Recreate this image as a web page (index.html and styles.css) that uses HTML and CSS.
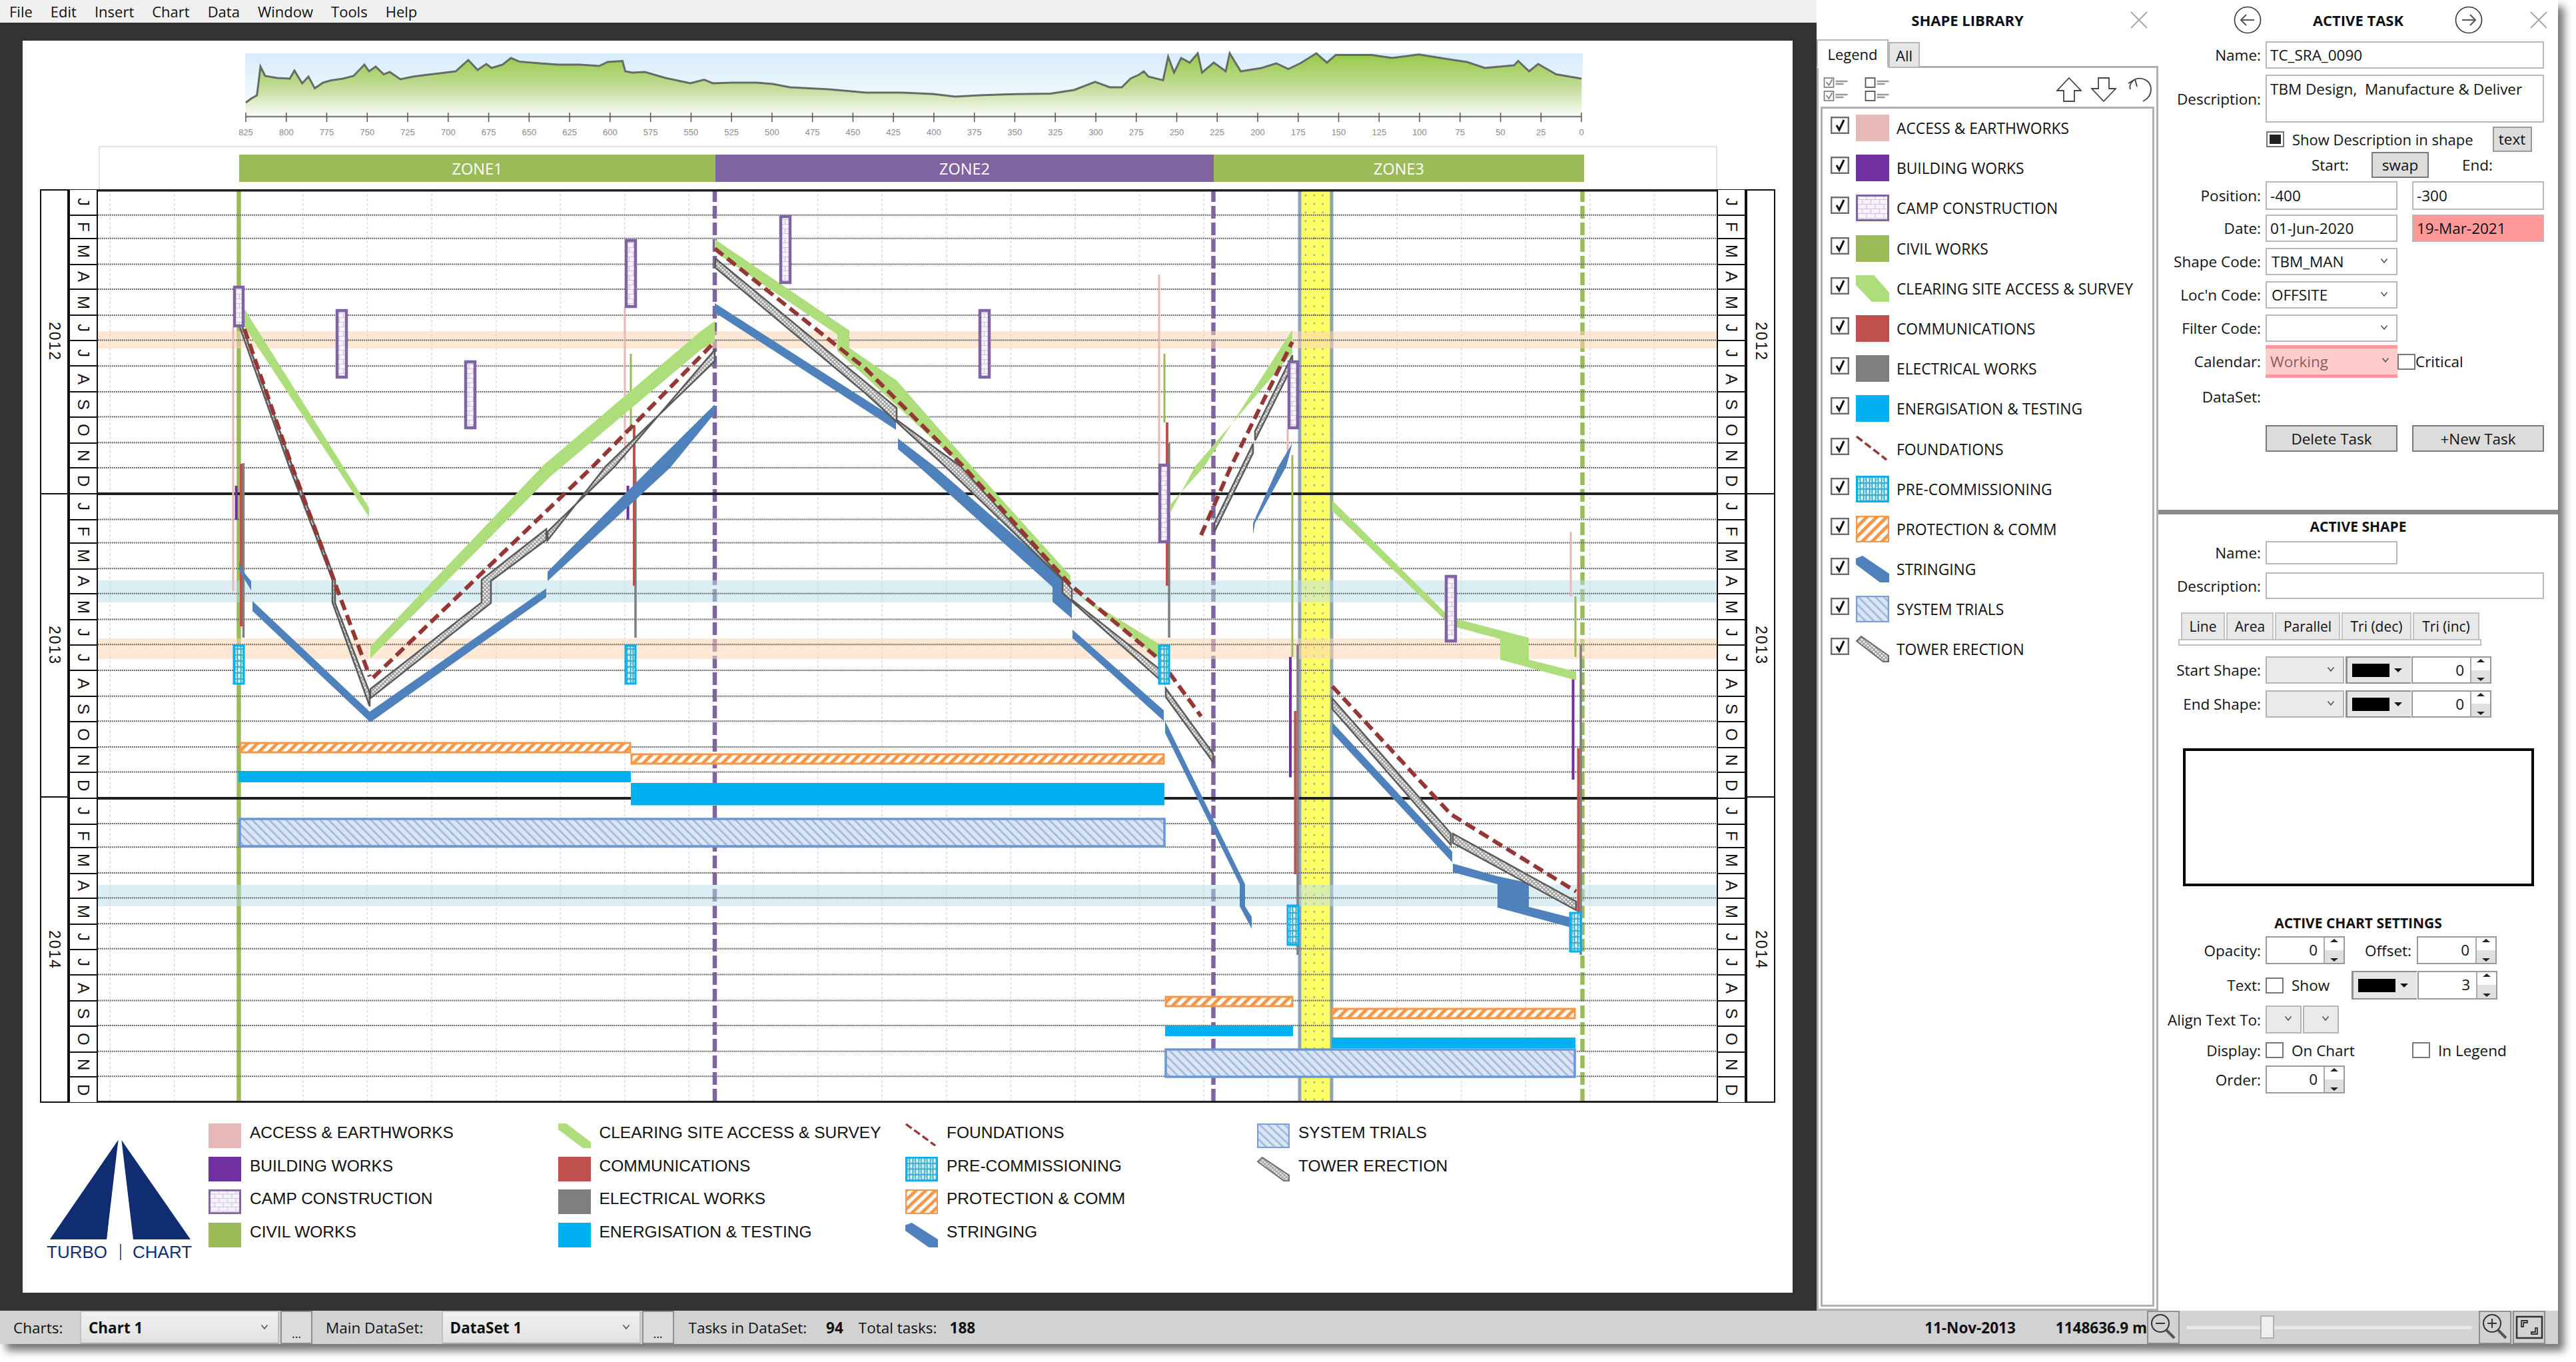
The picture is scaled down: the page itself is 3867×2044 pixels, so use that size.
FILE: index.html
```html
<!DOCTYPE html>
<html lang="en">
<head>
<meta charset="utf-8">
<title>Turbo Chart</title>
<link rel="stylesheet" href="styles.css">
</head>
<body>
<svg class="defs" width="0" height="0" aria-hidden="true">
  <defs>
    <pattern id="brick" width="13" height="14" patternUnits="userSpaceOnUse"><rect width="13" height="14" fill="#f6f3fa"/><path d="M0 .5H13M0 7.5H13M3 0V7M9.5 7V14" stroke="#cfc3e0" stroke-width="1.2" fill="none"/></pattern>
    <pattern id="weave" width="9" height="9" patternUnits="userSpaceOnUse"><rect width="9" height="9" fill="#e4f6fb"/><path d="M0 1C3 3 4 5 2 9M9 1C6 3 5 5 7 9M2 0C4 3 5 3 7 0" stroke="#35aecb" stroke-width="2" fill="none"/></pattern>
    <pattern id="orange" width="10.5" height="10.5" patternUnits="userSpaceOnUse" patternTransform="rotate(45)"><rect width="10.5" height="10.5" fill="#fff"/><rect width="5" height="10.5" fill="#f79646"/></pattern>
    <pattern id="trial" width="9" height="9" patternUnits="userSpaceOnUse" patternTransform="rotate(-45)"><rect width="9" height="9" fill="#dbe4f3"/><rect width="2.6" height="9" fill="#9db8de"/></pattern>
    <pattern id="lattice" width="6" height="6" patternUnits="userSpaceOnUse"><rect width="6" height="6" fill="#f2f2f2"/><path d="M0 0L6 6M6 0L0 6" stroke="#9a9a9a" stroke-width="1.5"/></pattern>
    <pattern id="dots" width="12.8" height="12.8" x="1955" y="287" patternUnits="userSpaceOnUse"><rect x="5" y="5" width="2" height="2.5" fill="#7f93a8"/></pattern>
    <linearGradient id="sky" x1="0" y1="0" x2="0" y2="1"><stop offset="0" stop-color="#d7ecfb"/><stop offset=".8" stop-color="#f2f9fd"/><stop offset="1" stop-color="#fff"/></linearGradient>
    <linearGradient id="hill" gradientUnits="userSpaceOnUse" x1="0" y1="85" x2="0" y2="172"><stop offset="0" stop-color="#99cb4e"/><stop offset=".55" stop-color="#c4dd9c"/><stop offset="1" stop-color="#f8fbf3"/></linearGradient>
    <symbol id="s-access" viewBox="0 0 50 40" preserveAspectRatio="none"><rect width="50" height="40" fill="#e6b9b8"/></symbol>
    <symbol id="s-building" viewBox="0 0 50 40" preserveAspectRatio="none"><rect width="50" height="40" fill="#7030a0"/></symbol>
    <symbol id="s-camp" viewBox="0 0 50 40" preserveAspectRatio="none"><rect x="1.5" y="1.5" width="47" height="37" fill="url(#brick)" stroke="#8064a2" stroke-width="3"/></symbol>
    <symbol id="s-civil" viewBox="0 0 50 40" preserveAspectRatio="none"><rect width="50" height="40" fill="#9bbb59"/></symbol>
    <symbol id="s-clearing" viewBox="0 0 50 40" preserveAspectRatio="none"><polygon points="0,0 27,0 50,26 50,40 24,40 0,15" fill="#aedd7c"/></symbol>
    <symbol id="s-comm" viewBox="0 0 50 40" preserveAspectRatio="none"><rect width="50" height="40" fill="#c0504d"/></symbol>
    <symbol id="s-elec" viewBox="0 0 50 40" preserveAspectRatio="none"><rect width="50" height="40" fill="#7f7f7f"/></symbol>
    <symbol id="s-energy" viewBox="0 0 50 40" preserveAspectRatio="none"><rect width="50" height="40" fill="#00b0f0"/></symbol>
    <symbol id="s-found" viewBox="0 0 50 40" preserveAspectRatio="none"><path d="M1 1L46 36" stroke="#953735" stroke-width="3.5" stroke-dasharray="11 5" fill="none"/></symbol>
    <symbol id="s-pre" viewBox="0 0 50 40" preserveAspectRatio="none"><rect x="1" y="1" width="48" height="38" fill="url(#weave)" stroke="#00b0f0" stroke-width="2.5"/></symbol>
    <symbol id="s-prot" viewBox="0 0 50 40" preserveAspectRatio="none"><rect x="1" y="1" width="48" height="38" fill="url(#orange)" stroke="#f79646" stroke-width="2.5"/></symbol>
    <symbol id="s-string" viewBox="0 0 50 40" preserveAspectRatio="none"><polygon points="0,4 10,0 50,27 50,40 36,40 0,13" fill="#4f81bd"/></symbol>
    <symbol id="s-trial" viewBox="0 0 50 40" preserveAspectRatio="none"><rect x="1" y="1" width="48" height="38" fill="url(#trial)" stroke="#7ba0d4" stroke-width="2.5"/></symbol>
    <symbol id="s-tower" viewBox="0 0 50 40" preserveAspectRatio="none"><polygon points="1,8 8,1 49,30 49,39 41,39" fill="url(#lattice)" stroke="#6a6a6a" stroke-width="2"/></symbol>
    <symbol id="check" viewBox="0 0 28 26"><rect x="1.2" y="1.2" width="25.6" height="23.6" fill="#fff" stroke="#6d6d6d" stroke-width="2.4"/><path d="M9 13L13 20L20 5" fill="none" stroke="#111" stroke-width="3"/></symbol>
    <symbol id="chev" viewBox="0 0 12 12"><path d="M1.5 3.5L6 9L10.5 3.5" fill="none" stroke="#555" stroke-width="1.6"/></symbol>
    <symbol id="close" viewBox="0 0 28 28"><path d="M2 2L26 26M26 2L2 26" stroke="#a8a8a8" stroke-width="2" fill="none"/></symbol>
  </defs>
</svg>

<div class="app">
  <div class="top">
    <div class="workspace">
      <nav class="menu"><span>File</span><span>Edit</span><span>Insert</span><span>Chart</span><span>Data</span><span>Window</span><span>Tools</span><span>Help</span></nav>
      <main class="dark">
        <div class="canvas">
          <svg class="profile" viewBox="340 61 2070 158" width="2070" height="158">
            <rect x="368" y="80" width="2008" height="92" fill="url(#sky)"/>
            <path d="M369 154L377 148L385.600 143L388 125L391 100L398 114L416 117L435 118L442 106L453.600 125L463 115L472.600 132.600L485 124L497.500 120.500L515 118L530.700 114L547 97L554 107L564 100L576 111.600L585 108L601 119L620 115L638.500 112.500L660 110L684 107L703 90L717 105L730 96L738 102L754.600 97L767 87L779.400 92.400L810 95L837.500 97L870 97L899.600 99L912 93L934.500 91.500L938.600 107L949 109L968 108L999 117L1036.500 125L1057 119.600L1070 125L1100 124L1136 124L1160 126L1186 131L1244 134L1300 139L1354 139L1400 141L1434 145L1470 143L1514 141.500L1577 140.600L1612.500 135L1644 122.800L1666 131L1684 131L1697 118L1710 112L1717 107L1724 115L1746 120.500L1753.600 85L1762.500 109L1773 87L1786 94L1798 80L1804.500 109L1822 94L1840 107L1846 80L1862.500 107L1894 102L1916 95L1934 103.600L1952 95L1976 80L1992 94L2005 82.600L2059 82.600L2090 87L2130 81.700L2175 89L2202 93L2229 102L2273 98L2279 91.500L2295.500 107L2309 96L2336 111.600L2374 118V172H369Z" fill="url(#hill)"/>
            <path d="M369 154L377 148L385.600 143L388 125L391 100L398 114L416 117L435 118L442 106L453.600 125L463 115L472.600 132.600L485 124L497.500 120.500L515 118L530.700 114L547 97L554 107L564 100L576 111.600L585 108L601 119L620 115L638.500 112.500L660 110L684 107L703 90L717 105L730 96L738 102L754.600 97L767 87L779.400 92.400L810 95L837.500 97L870 97L899.600 99L912 93L934.500 91.500L938.600 107L949 109L968 108L999 117L1036.500 125L1057 119.600L1070 125L1100 124L1136 124L1160 126L1186 131L1244 134L1300 139L1354 139L1400 141L1434 145L1470 143L1514 141.500L1577 140.600L1612.500 135L1644 122.800L1666 131L1684 131L1697 118L1710 112L1717 107L1724 115L1746 120.500L1753.600 85L1762.500 109L1773 87L1786 94L1798 80L1804.500 109L1822 94L1840 107L1846 80L1862.500 107L1894 102L1916 95L1934 103.600L1952 95L1976 80L1992 94L2005 82.600L2059 82.600L2090 87L2130 81.700L2175 89L2202 93L2229 102L2273 98L2279 91.500L2295.500 107L2309 96L2336 111.600L2374 118" class="ridge"/>
            <path class="axis" d="M369 175H2374"/>
            <path class="ticks" d="M369 169V183M429.800 169V183M490.500 169V183M551.300 169V183M612 169V183M672.800 169V183M733.600 169V183M794.300 169V183M855.100 169V183M915.800 169V183M976.600 169V183M1037.400 169V183M1098.100 169V183M1158.900 169V183M1219.600 169V183M1280.400 169V183M1341.200 169V183M1401.900 169V183M1462.700 169V183M1523.400 169V183M1584.200 169V183M1645 169V183M1705.700 169V183M1766.500 169V183M1827.200 169V183M1888 169V183M1948.800 169V183M2009.500 169V183M2070.300 169V183M2131 169V183M2191.800 169V183M2252.600 169V183M2313.300 169V183M2374 169V183"/>
            <g class="scale">
              <text x="369" y="203">825</text><text x="429.800" y="203">800</text><text x="490.500" y="203">775</text><text x="551.300" y="203">750</text><text x="612" y="203">725</text><text x="672.800" y="203">700</text><text x="733.600" y="203">675</text><text x="794.300" y="203">650</text><text x="855.100" y="203">625</text><text x="915.800" y="203">600</text><text x="976.600" y="203">575</text><text x="1037.400" y="203">550</text><text x="1098.100" y="203">525</text><text x="1158.900" y="203">500</text><text x="1219.600" y="203">475</text><text x="1280.400" y="203">450</text><text x="1341.200" y="203">425</text><text x="1401.900" y="203">400</text><text x="1462.700" y="203">375</text><text x="1523.400" y="203">350</text><text x="1584.200" y="203">325</text><text x="1645" y="203">300</text><text x="1705.700" y="203">275</text><text x="1766.500" y="203">250</text><text x="1827.200" y="203">225</text><text x="1888" y="203">200</text><text x="1948.800" y="203">175</text><text x="2009.500" y="203">150</text><text x="2070.300" y="203">125</text><text x="2131" y="203">100</text><text x="2191.800" y="203">75</text><text x="2252.600" y="203">50</text><text x="2313.300" y="203">25</text><text x="2374" y="203">0</text>
            </g>
          </svg>

          <div class="zones">
            <div class="zone z-green z1">ZONE1</div>
            <div class="zone z-purple z2">ZONE2</div>
            <div class="zone z-green z3">ZONE3</div>
          </div>

          <div class="chart">
            <div class="years"><div class="year">2012</div><div class="year">2013</div><div class="year">2014</div></div>
            <div class="months">
              <div class="d31">J</div><div class="d28">F</div><div class="d31">M</div><div class="d30">A</div><div class="d31">M</div><div class="d30">J</div><div class="d31">J</div><div class="d31">A</div><div class="d30">S</div><div class="d31">O</div><div class="d30">N</div><div class="d31">D</div>
              <div class="d31">J</div><div class="d28">F</div><div class="d31">M</div><div class="d30">A</div><div class="d31">M</div><div class="d30">J</div><div class="d31">J</div><div class="d31">A</div><div class="d30">S</div><div class="d31">O</div><div class="d30">N</div><div class="d31">D</div>
              <div class="d31">J</div><div class="d28">F</div><div class="d31">M</div><div class="d30">A</div><div class="d31">M</div><div class="d30">J</div><div class="d31">J</div><div class="d31">A</div><div class="d30">S</div><div class="d31">O</div><div class="d30">N</div><div class="d31">D</div>
            </div>
            <svg class="plot" viewBox="148 284 2430 1371" width="2430" height="1371">
              <path class="vgrid" d="M166 284V1655M262.600 284V1655M359.200 284V1655M455.800 284V1655M552.400 284V1655M649 284V1655M745.600 284V1655M842.200 284V1655M938.800 284V1655M1035.400 284V1655M1132 284V1655M1228.600 284V1655M1325.200 284V1655M1421.800 284V1655M1518.400 284V1655M1615 284V1655M1711.600 284V1655M1808.200 284V1655M1904.800 284V1655M2001.400 284V1655M2098 284V1655M2194.600 284V1655M2291.200 284V1655M2387.800 284V1655M2484.400 284V1655"/>
              <rect class="yellow" x="1952" y="284" width="48" height="1371"/>
              <rect x="1952" y="284" width="48" height="1371" fill="url(#dots)"/>
              <path class="yellow-edge" d="M1952 284V1655M2000 284V1655"/>
              <path class="z-solid" d="M359.500 284V1655"/>
              <path class="z-gap" d="M1074 284V1655M1822.500 284V1655M2376.500 284V1655"/>
              <path class="z-dash-p" d="M1074 284V1655M1822.500 284V1655"/>
              <path class="z-dash-g" d="M2376.500 284V1655"/>
              <rect class="band-o" x="148" y="497" width="2430" height="26"/>
              <rect class="band-o" x="148" y="958" width="2430" height="31"/>
              <rect class="band-b" x="148" y="871" width="2430" height="33"/>
              <rect class="band-b" x="148" y="1328" width="2430" height="32"/>
              <path class="hgrid" d="M148 322.800H2578M148 357.800H2578M148 396.600H2578M148 434.100H2578M148 472.900H2578M148 510.500H2578M148 549.200H2578M148 588H2578M148 625.500H2578M148 664.300H2578M148 701.900H2578M148 779.500H2578M148 814.500H2578M148 853.300H2578M148 890.800H2578M148 929.600H2578M148 967.200H2578M148 1005.900H2578M148 1044.700H2578M148 1082.200H2578M148 1121H2578M148 1158.600H2578M148 1236.100H2578M148 1271.200H2578M148 1310H2578M148 1347.500H2578M148 1386.300H2578M148 1423.800H2578M148 1462.600H2578M148 1501.400H2578M148 1538.900H2578M148 1577.700H2578M148 1615.200H2578"/>
              <path class="yline" d="M148 285.500H2578M148 741H2578M148 1198H2578M148 1654H2578"/>

              <path class="l-access" d="M351 491V887M939 462V690M1741 412V696M1934 644V683M2359 798V895"/>
              <path class="l-civil" d="M948 531V647M1749 531V634M1941 683V986M2366 895V986"/>
              <path class="l-elec" d="M366.500 695V957M955 700V957M1756 665V957M1949 968V1433M2374 968V1433"/>
              <path class="l-comm" d="M363 696V940M953 638V879M1753 634V879M1945.500 1067V1312M2370.500 1123V1369"/>
              <path class="l-build" d="M355.700 729V780M943.600 729V780M1938 986V1166.500M2362.500 1017V1170"/>

              <g class="clearing">
                <polygon points="360,451 555,762 555,776 360,478"/>
                <polygon points="557,970 817,698 1053,497 1074,482 1074,513 1053,525 826,716 557,988"/>
                <polygon points="1074,359 1276,496 1276,522 1347,571 1460,700 1608,864 1608,885 1742,967 1742,990 1604,880 1445,700 1300,565 1258,527 1258,502 1074,378"/>
                <polygon points="1941,495 1941,530 1795,700 1757,771 1757,758 1809,700"/>
                <polygon points="2001,751 2170,919 2184,928 2296,957 2296,990 2367,1008 2367,1021 2253,990 2253,959 2179,939 2001,767"/>
              </g>
              <g class="stringing">
                <polygon points="360,842 364,855 378,872 378,886 360,856"/>
                <polygon points="380,902 556,1068 821,883 821,896 557,1084 380,917"/>
                <polygon points="823,858 985,695 1074,607 1074,620 1007,702 823,872"/>
                <polygon points="1074,455 1346,629 1346,645 1074,469"/>
                <polygon points="1349,658 1404,700 1600,870 1610,900 1610,928 1581,903 1581,881 1380,700 1349,674"/>
                <polygon points="1611,945 1748,1066 1748,1082 1611,958"/>
                <polygon points="1750,1082 1870,1327 1870,1360 1880,1376 1880,1394 1862,1360 1862,1327 1750,1100"/>
                <polygon points="1941,665 1932,700 1885,785 1882,802 1882,785 1920,700"/>
                <polygon points="2001,1084 2181,1278 2181,1294 2001,1100"/>
                <polygon points="2182,1296 2249,1315 2296,1325 2296,1361 2367,1379 2367,1394 2249,1362 2249,1327 2182,1309"/>
              </g>
              <g class="tower">
                <polygon points="360,488 364,488 440,700 504,870 504,905 556,1040 556,1060 500,904 500,870 435,700"/>
                <polygon points="557,1034 724,904 724,870 821,794 821,810 738,872 738,905 557,1048"/>
                <polygon points="823,798 924,700 1074,525 1074,542 910,700 823,811"/>
                <polygon points="1075,388 1347,612 1347,630 1443,700 1610,884 1610,900 1749,1010 1749,1026 1596,890 1596,870 1420,700 1300,590 1075,402"/>
                <polygon points="1751,1033 1822,1131 1822,1144 1751,1046"/>
                <polygon points="1941,533 1941,549 1885,661 1885,647"/>
                <polygon points="1882,666 1882,680 1824,798 1824,785"/>
                <polygon points="2001,1048 2179,1251 2179,1268 2001,1064"/>
                <polygon points="2182,1251 2367,1353 2367,1366 2182,1265"/>
              </g>
              <path class="found" d="M360 471L439.500 700L506 881L556 1015M561 1017L891 700L1074 513M1074 373L1300 553L1447 700L1608 878L1742 990L1804 1075M1804 803L1849 700L1941 513M2001 1030L2179 1222L2367 1338"/>
              <g class="camp">
                <rect x="353" y="431" width="13" height="58"/>
                <rect x="507" y="466" width="14" height="100"/>
                <rect x="700" y="543" width="14" height="99"/>
                <rect x="941" y="361" width="14" height="99"/>
                <rect x="1173" y="325" width="14" height="99"/>
                <rect x="1472" y="466" width="14" height="100"/>
                <rect x="1936" y="543" width="13" height="99"/>
                <rect x="1742" y="698" width="13" height="115"/>
                <rect x="2172" y="865" width="14" height="97"/>
              </g>
              <g class="pre">
                <rect x="352" y="969" width="15" height="57"/>
                <rect x="940" y="969" width="15" height="57"/>
                <rect x="1741" y="969" width="15" height="57"/>
                <rect x="1934" y="1359" width="16" height="59"/>
                <rect x="2358" y="1370" width="16" height="58"/>
              </g>
              <g class="prot">
                <rect x="362" y="1115" width="585" height="14"/>
                <rect x="949" y="1132" width="799" height="14"/>
                <rect x="1751" y="1496" width="190" height="14"/>
                <rect x="2001" y="1514" width="364" height="14"/>
              </g>
              <g class="energy">
                <rect x="359" y="1157" width="589" height="17"/>
                <rect x="948" y="1175" width="801" height="33.500"/>
                <rect x="1750" y="1539" width="192" height="16"/>
                <rect x="2000" y="1557" width="366" height="16"/>
              </g>
              <g class="trial">
                <rect x="361" y="1229" width="1388" height="41"/>
                <rect x="1751" y="1575" width="614" height="41"/>
              </g>
            </svg>
            <div class="months">
              <div class="d31">J</div><div class="d28">F</div><div class="d31">M</div><div class="d30">A</div><div class="d31">M</div><div class="d30">J</div><div class="d31">J</div><div class="d31">A</div><div class="d30">S</div><div class="d31">O</div><div class="d30">N</div><div class="d31">D</div>
              <div class="d31">J</div><div class="d28">F</div><div class="d31">M</div><div class="d30">A</div><div class="d31">M</div><div class="d30">J</div><div class="d31">J</div><div class="d31">A</div><div class="d30">S</div><div class="d31">O</div><div class="d30">N</div><div class="d31">D</div>
              <div class="d31">J</div><div class="d28">F</div><div class="d31">M</div><div class="d30">A</div><div class="d31">M</div><div class="d30">J</div><div class="d31">J</div><div class="d31">A</div><div class="d30">S</div><div class="d31">O</div><div class="d30">N</div><div class="d31">D</div>
            </div>
            <div class="years"><div class="year">2012</div><div class="year">2013</div><div class="year">2014</div></div>
          </div>

          <div class="legend">
            <svg class="logo" viewBox="34 1705 279 190" width="279" height="190">
              <polygon points="177.500,1711 75,1860 160,1860" class="logo-fill"/>
              <polygon points="75,1860 177.500,1711 170,1760 160,1860" class="logo-fill"/>
              <polygon points="182.400,1711 200,1860 286,1860" class="logo-fill"/>
              <path d="M181 1867V1891" stroke="#112d71" stroke-width="1.5"/>
              <text class="logo-text" x="70" y="1888">TURBO</text>
              <text class="logo-text" x="199" y="1888">CHART</text>
            </svg>
            <div class="leg-grid">
              <div class="leg"><svg class="sw"><use href="#s-access"/></svg><span>ACCESS &amp; EARTHWORKS</span></div>
              <div class="leg"><svg class="sw"><use href="#s-building"/></svg><span>BUILDING WORKS</span></div>
              <div class="leg"><svg class="sw"><use href="#s-camp"/></svg><span>CAMP CONSTRUCTION</span></div>
              <div class="leg"><svg class="sw"><use href="#s-civil"/></svg><span>CIVIL WORKS</span></div>
              <div class="leg"><svg class="sw" viewBox="0 0 49 37"><polygon points="0,0 12,0 49,28 49,37 37,37 0,9" fill="#aedd7c"/></svg><span>CLEARING SITE ACCESS &amp; SURVEY</span></div>
              <div class="leg"><svg class="sw"><use href="#s-comm"/></svg><span>COMMUNICATIONS</span></div>
              <div class="leg"><svg class="sw"><use href="#s-elec"/></svg><span>ELECTRICAL WORKS</span></div>
              <div class="leg"><svg class="sw"><use href="#s-energy"/></svg><span>ENERGISATION &amp; TESTING</span></div>
              <div class="leg"><svg class="sw"><use href="#s-found"/></svg><span>FOUNDATIONS</span></div>
              <div class="leg"><svg class="sw"><use href="#s-pre"/></svg><span>PRE-COMMISSIONING</span></div>
              <div class="leg"><svg class="sw"><use href="#s-prot"/></svg><span>PROTECTION &amp; COMM</span></div>
              <div class="leg"><svg class="sw"><use href="#s-string"/></svg><span>STRINGING</span></div>
              <div class="leg"><svg class="sw"><use href="#s-trial"/></svg><span>SYSTEM TRIALS</span></div>
              <div class="leg"><svg class="sw"><use href="#s-tower"/></svg><span>TOWER ERECTION</span></div>
            </div>
          </div>
        </div>
      </main>
    </div>

    <aside class="library">
      <header class="lib-head"><h2 class="lib-title">SHAPE LIBRARY</h2><svg class="x-icon"><use href="#close"/></svg></header>
      <div class="tabs"><div class="tab active">Legend</div><div class="tab">All</div></div>
      <div class="tabpane">
        <div class="tools">
          <svg class="tool" viewBox="0 0 37 37"><g fill="none" stroke="#777" stroke-width="1.6"><rect x="1" y="1" width="14" height="14"/><rect x="1" y="21" width="14" height="14"/><path d="M4 7L8 12L13 3M4 27L8 32L13 23"/><path stroke="#999" stroke-width="2.5" d="M18 6H36M18 10H30M18 26H36M18 30H30"/></g></svg>
          <svg class="tool t2" viewBox="0 0 37 37"><g fill="none" stroke="#555" stroke-width="1.8"><rect x="1" y="1" width="14" height="14"/><rect x="1" y="21" width="14" height="14"/><path stroke="#999" stroke-width="2.5" d="M18 6H36M18 10H30M18 26H36M18 30H30"/></g></svg>
          <svg class="tool t3" viewBox="0 0 38 37"><path d="M19 1L37 20H27V36H11V20H1Z" fill="#fff" stroke="#444" stroke-width="1.8"/></svg>
          <svg class="tool t4" viewBox="0 0 38 37"><path d="M19 36L37 17H27V1H11V17H1Z" fill="#fff" stroke="#444" stroke-width="1.8"/></svg>
          <svg class="tool t5" viewBox="0 0 40 37"><path d="M14 3C25 -1 38 5 38 18C38 28 32 33 26 36M14 3L17 14M14 3L4 9M14 3C8 7 5 12 7 18" fill="none" stroke="#444" stroke-width="1.8"/></svg>
        </div>
        <ul class="list">
          <li><svg class="cb"><use href="#check"/></svg><svg class="lw"><use href="#s-access"/></svg><span>ACCESS &amp; EARTHWORKS</span></li>
          <li><svg class="cb"><use href="#check"/></svg><svg class="lw"><use href="#s-building"/></svg><span>BUILDING WORKS</span></li>
          <li><svg class="cb"><use href="#check"/></svg><svg class="lw"><use href="#s-camp"/></svg><span>CAMP CONSTRUCTION</span></li>
          <li><svg class="cb"><use href="#check"/></svg><svg class="lw"><use href="#s-civil"/></svg><span>CIVIL WORKS</span></li>
          <li><svg class="cb"><use href="#check"/></svg><svg class="lw"><use href="#s-clearing"/></svg><span>CLEARING SITE ACCESS &amp; SURVEY</span></li>
          <li><svg class="cb"><use href="#check"/></svg><svg class="lw"><use href="#s-comm"/></svg><span>COMMUNICATIONS</span></li>
          <li><svg class="cb"><use href="#check"/></svg><svg class="lw"><use href="#s-elec"/></svg><span>ELECTRICAL WORKS</span></li>
          <li><svg class="cb"><use href="#check"/></svg><svg class="lw"><use href="#s-energy"/></svg><span>ENERGISATION &amp; TESTING</span></li>
          <li><svg class="cb"><use href="#check"/></svg><svg class="lw"><use href="#s-found"/></svg><span>FOUNDATIONS</span></li>
          <li><svg class="cb"><use href="#check"/></svg><svg class="lw"><use href="#s-pre"/></svg><span>PRE-COMMISSIONING</span></li>
          <li><svg class="cb"><use href="#check"/></svg><svg class="lw"><use href="#s-prot"/></svg><span>PROTECTION &amp; COMM</span></li>
          <li><svg class="cb"><use href="#check"/></svg><svg class="lw"><use href="#s-string"/></svg><span>STRINGING</span></li>
          <li><svg class="cb"><use href="#check"/></svg><svg class="lw"><use href="#s-trial"/></svg><span>SYSTEM TRIALS</span></li>
          <li><svg class="cb"><use href="#check"/></svg><svg class="lw"><use href="#s-tower"/></svg><span>TOWER ERECTION</span></li>
        </ul>
      </div>
    </aside>

    <aside class="props">
      <section class="task">
        <header class="task-head">
          <svg class="nav-icon" viewBox="0 0 42 42"><circle cx="21" cy="21" r="19.500" fill="none" stroke="#333" stroke-width="1.6"/><path d="M31 21H12M19 13L11 21L19 29" fill="none" stroke="#555" stroke-width="2"/></svg>
          <h2 class="task-title">ACTIVE TASK</h2>
          <svg class="nav-icon" viewBox="0 0 42 42"><circle cx="21" cy="21" r="19.500" fill="none" stroke="#333" stroke-width="1.6"/><path d="M11 21H30M23 13L31 21L23 29" fill="none" stroke="#555" stroke-width="2"/></svg>
          <svg class="x-icon x2"><use href="#close"/></svg>
        </header>
        <div class="row h41 first"><label class="lbl">Name:</label><div class="in wide">TC_SRA_0090</div></div>
        <div class="row h72 g9"><label class="lbl">Description:</label><div class="in wide tall">TBM Design,  Manufacture &amp; Deliver</div></div>
        <div class="row h39 g5"><span class="lbl"></span><span class="box filled"></span><span class="show-text">Show Description in shape</span><div class="btn text-btn">text</div></div>
        <div class="row h39"><span class="start-lbl">Start:</span><div class="btn swap-btn">swap</div><span class="end-lbl">End:</span></div>
        <div class="row h43 g5"><label class="lbl">Position:</label><div class="in">-400</div><div class="in col2">-300</div></div>
        <div class="row h41 g7"><label class="lbl">Date:</label><div class="in">01-Jun-2020</div><div class="in col2 alert">19-Mar-2021</div></div>
        <div class="row h41 g9"><label class="lbl">Shape Code:</label><div class="in sel">TBM_MAN<svg class="chev"><use href="#chev"/></svg></div></div>
        <div class="row h41 g9"><label class="lbl">Loc'n Code:</label><div class="in sel">OFFSITE<svg class="chev"><use href="#chev"/></svg></div></div>
        <div class="row h41 g9"><label class="lbl">Filter Code:</label><div class="in sel"><svg class="chev"><use href="#chev"/></svg></div></div>
        <div class="row h49 g5"><label class="lbl">Calendar:</label><div class="in sel cal">Working<svg class="chev"><use href="#chev"/></svg></div><span class="box crit"></span><span class="crit-text">Critical</span></div>
        <div class="row h40 g8"><label class="lbl">DataSet:</label></div>
        <div class="row h40 g23"><span class="lbl"></span><div class="btn act">Delete Task</div><div class="btn act col2">+New Task</div></div>
      </section>

      <section class="shape">
        <h2 class="sec-title">ACTIVE SHAPE</h2>
        <div class="row h35 s-first"><label class="lbl">Name:</label><div class="in"></div></div>
        <div class="row h40 g12"><label class="lbl">Description:</label><div class="in wide"></div></div>
        <div class="shape-tabs">
          <div class="stab w66">Line</div><div class="stab w71">Area</div><div class="stab w98">Parallel</div><div class="stab w105">Tri (dec)</div><div class="stab w100">Tri (inc)</div>
        </div>
        <div class="strip"></div>
        <div class="row h41 g16"><label class="lbl">Start Shape:</label><div class="combo w118"><svg class="chev"><use href="#chev"/></svg></div><div class="colour"><i></i><b></b></div><div class="spin"><span>0</span><em></em></div></div>
        <div class="row h41 g10"><label class="lbl">End Shape:</label><div class="combo w118"><svg class="chev"><use href="#chev"/></svg></div><div class="colour"><i></i><b></b></div><div class="spin"><span>0</span><em></em></div></div>
        <div class="preview"></div>
        <h2 class="sec-title settings">ACTIVE CHART SETTINGS</h2>
        <div class="row h42"><label class="lbl">Opacity:</label><div class="spin w119"><span>0</span><em></em></div><label class="off-lbl">Offset:</label><div class="spin"><span>0</span><em></em></div></div>
        <div class="row h43 g10"><label class="lbl">Text:</label><span class="box"></span><span class="opt">Show</span><div class="colour"><i></i><b></b></div><div class="spin"><span>3</span><em></em></div></div>
        <div class="row h42 g9"><label class="lbl">Align Text To:</label><div class="combo w54"><svg class="chev"><use href="#chev"/></svg></div><div class="combo w54 gl"><svg class="chev"><use href="#chev"/></svg></div></div>
        <div class="row h30 g10"><label class="lbl">Display:</label><span class="box"></span><span class="opt opt-wide">On Chart</span><span class="box"></span><span class="opt">In Legend</span></div>
        <div class="row h42 g8"><label class="lbl">Order:</label><div class="spin w119"><span>0</span><em></em></div></div>
      </section>
    </aside>
  </div>

  <footer class="status">
    <span class="st-lbl w120">Charts:</span>
    <div class="st-combo"><strong>Chart 1</strong><svg class="chev st-chev"><use href="#chev"/></svg></div>
    <div class="st-btn">...</div>
    <span class="st-lbl w194">Main DataSet:</span>
    <div class="st-combo"><strong>DataSet 1</strong><svg class="chev st-chev"><use href="#chev"/></svg></div>
    <div class="st-btn">...</div>
    <span class="st-txt tasks">Tasks in DataSet:</span><strong class="st-num n94">94</strong>
    <span class="st-txt">Total tasks:</span><strong class="st-num n188">188</strong>
    <strong class="st-date">11-Nov-2013</strong>
    <strong class="st-len">1148636.9 m</strong>
    <div class="st-icon w48"><svg viewBox="0 0 44 44" width="44" height="44"><circle cx="17" cy="16" r="13" fill="none" stroke="#333" stroke-width="2"/><path d="M10 16H24" stroke="#333" stroke-width="2"/><path d="M26 26L38 38" stroke="#555" stroke-width="4"/></svg></div>
    <div class="slider"><div class="track"></div><div class="thumb"></div></div>
    <div class="st-icon w48"><svg viewBox="0 0 44 44" width="44" height="44"><circle cx="17" cy="16" r="13" fill="none" stroke="#333" stroke-width="2"/><path d="M10 16H24M17 9V23" stroke="#333" stroke-width="2"/><path d="M26 26L38 38" stroke="#555" stroke-width="4"/></svg></div>
    <div class="st-icon w48 fit"><svg viewBox="0 0 44 44" width="44" height="44"><rect x="3" y="6" width="38" height="32" fill="none" stroke="#333" stroke-width="2.500"/><path d="M10 21V12H19V15H13V21ZM34 23V32H25V29H31V23Z" fill="none" stroke="#333" stroke-width="1.800"/></svg></div>
  </footer>
</div>
</body>
</html>
```
FILE: styles.css
```css
* { box-sizing: border-box; }
html, body { margin: 0; padding: 0; background: #fff; }
body { width: 3867px; height: 2044px; overflow: hidden; font-family: "Open Sans", "Liberation Sans", sans-serif; color: #111; font-size: 22.500px; }
h2 { margin: 0; font-size: 22px; font-weight: 700; }
ul { margin: 0; padding: 0; list-style: none; }
.defs { position: absolute; }

.app { width: 3840px; height: 2017px; display: flex; flex-direction: column; box-shadow: 9px 10px 12px rgba(0,0,0,.55); background: #fff; }
.top { height: 1967px; display: flex; }
.workspace { width: 2727px; display: flex; flex-direction: column; }

.menu { height: 34px; background: #f0f0f0; display: flex; gap: 27px; padding-left: 14px; align-items: center; font-size: 22px; line-height: 30px; }

.dark { flex: 1; background: #333; padding: 27px 36px 27px 34px; }
.canvas { width: 2657px; height: 1879px; background: #fff; display: flex; flex-direction: column; }

.profile { display: block; margin-left: 306px; overflow: visible; }
.ridge { fill: none; stroke: #666b66; stroke-width: 3; }
.axis { stroke: #808080; stroke-width: 2.500; fill: none; }
.ticks { stroke: #555; stroke-width: 1.500; fill: none; }
.scale text { font-family: "Liberation Sans", sans-serif; font-size: 13px; fill: #8a8a8a; text-anchor: middle; }

.zones { margin-left: 114px; width: 2430px; height: 65px; border: 2px solid #e2e2e2; border-bottom: 0; padding: 11px 0 0 209px; display: flex; align-items: flex-start; }
.zone { height: 41px; color: #fff; font-size: 23.500px; display: flex; align-items: center; justify-content: center; }
.z-green { background: #9bbb59; }
.z-purple { background: #8064a2; }
.z1 { width: 715px; }
.z2 { width: 748px; }
.z3 { width: 556px; }

.chart { margin-left: 26px; height: 1371px; display: grid; grid-template-columns: 43px 44px 2430px 44px 44px; font-family: "Liberation Sans", sans-serif; }
.years { display: grid; grid-template-rows: 1fr 1fr 1fr; border: 2px solid #111; border-width: 2px 2px 2px 2px; }
.year { writing-mode: vertical-rl; display: flex; align-items: center; justify-content: center; font-size: 23px; letter-spacing: 2px; border-bottom: 2.500px solid #111; }
.year:last-child { border-bottom: 0; }
.months { display: grid; grid-template-rows: repeat(36, auto); }
.months > div { writing-mode: vertical-rl; display: flex; align-items: center; justify-content: center; font-size: 24px; border: 2.500px solid #111; border-top-width: 1.500px; border-bottom-width: 1.500px; min-height: 0; height: 100%; }
.d31 { height: 38.790px; }
.d30 { height: 37.540px; }
.d28 { height: 35.030px; }
.months > .d31 { height: 38.790px; }
.months > .d30 { height: 37.540px; }
.months > .d28 { height: 35.030px; }

.plot { display: block; overflow: hidden; background: #fff; }
.vgrid { stroke: #dcdcdc; stroke-width: 1.500; stroke-dasharray: 4 3; fill: none; }
.hgrid { stroke: #6e6e6e; stroke-width: 2; stroke-dasharray: 2 1; fill: none; }
.yline { stroke: #1f1f1f; stroke-width: 4; fill: none; }
.yellow { fill: #ffff66; }
.yellow-edge { stroke: #8ea3b8; stroke-width: 5; fill: none; }
.z-solid { stroke: #9bbb59; stroke-width: 6.500; fill: none; }
.z-gap { stroke: #fff; stroke-width: 6.500; fill: none; }
.z-dash-p { stroke: #8064a2; stroke-width: 6.500; stroke-dasharray: 19 6; fill: none; }
.z-dash-g { stroke: #9bbb59; stroke-width: 6.500; stroke-dasharray: 19 6; fill: none; }
.band-o { fill: #fbd5b5; opacity: .55; }
.band-b { fill: #b7dde8; opacity: .5; }
.l-access { stroke: #e6b9b8; stroke-width: 3; fill: none; }
.l-civil { stroke: #9bbb59; stroke-width: 3; fill: none; }
.l-comm { stroke: #c0504d; stroke-width: 4; fill: none; }
.l-elec { stroke: #7f7f7f; stroke-width: 3.500; fill: none; }
.l-build { stroke: #7030a0; stroke-width: 4; fill: none; }
.clearing polygon { fill: #aedd7c; }
.stringing polygon { fill: #4f81bd; }
.tower polygon { fill: url(#lattice); stroke: #595959; stroke-width: 2.500; }
.found { stroke: #953735; stroke-width: 6; stroke-dasharray: 16 8; fill: none; }
.camp rect { fill: url(#brick); stroke: #8064a2; stroke-width: 4.500; }
.pre rect { fill: url(#weave); stroke: #00b0f0; stroke-width: 3; }
.prot rect { fill: url(#orange); stroke: #f79646; stroke-width: 3; }
.energy rect { fill: #00b0f0; }
.trial rect { fill: url(#trial); stroke: #6b96d6; stroke-width: 3.500; }

.legend { display: flex; margin-top: 31px; }
.logo { flex: none; margin-top: 19px; }
.logo-fill { fill: #112d71; }
.logo-text { font-family: "Liberation Sans", sans-serif; font-size: 26px; fill: #112d71; }
.leg-grid { display: grid; grid-auto-flow: column; grid-template-rows: repeat(4, 49.500px); grid-template-columns: 524.500px 521.500px 528px 400px; font-family: "Liberation Sans", sans-serif; font-size: 24.500px; }
.leg { display: flex; gap: 13px; height: 37px; }
.leg span { line-height: 28px; white-space: nowrap; }
.sw { width: 49px; height: 37px; flex: none; }

.library { width: 513px; background: #fff; display: flex; flex-direction: column; }
.lib-head { height: 59px; display: flex; align-items: center; flex: none; }
.lib-title { width: 453px; text-align: center; }
.x-icon { width: 28px; height: 28px; margin-left: 17px; flex: none; }
.tabs { height: 43px; flex: none; display: flex; align-items: flex-end; position: relative; z-index: 1; margin-bottom: -3px; }
.tab { height: 39px; width: 47px; background: #e6e6e6; border: 2.500px solid #b5b5b5; border-bottom-color: #b5b5b5; display: flex; align-items: center; justify-content: center; font-size: 22px; }
.tab.active { width: 108px; height: 43px; background: #fff; border-bottom-color: #fff; }
.tabpane { flex: 1; border: 3px solid #b0b0b0; padding: 0 3px 3px; margin-right: 0; display: flex; flex-direction: column; }
.tools { height: 58px; flex: none; display: flex; align-items: center; padding: 6px 0 0 4px; }
.tool { width: 38px; height: 37px; flex: none; }
.t2 { margin-left: 24px; }
.t3 { margin-left: 250px; }
.t4 { margin-left: 14px; }
.t5 { margin-left: 14px; width: 40px; }
.list { flex: 1; border: 3px solid #b0b0b0; padding: 9px 0 0 12px; }
.list li { height: 60.200px; display: flex; gap: 10px; font-size: 22.800px; }
.cb { width: 28px; height: 26px; margin-top: 3px; flex: none; }
.lw { width: 50px; height: 40px; flex: none; }
.list span { line-height: 42px; margin-left: 1px; white-space: nowrap; }

.props { width: 600px; background: #fff; display: flex; flex-direction: column; }
.task { height: 772px; border-bottom: 7px solid #8a8a8a; flex: none; }
.task-head { height: 59px; display: flex; align-items: center; padding-left: 113px; }
.nav-icon { width: 42px; height: 42px; flex: none; }
.task-title { width: 290px; text-align: center; }
.x2 { margin-left: 70px; }
.row { display: flex; align-items: center; flex: none; }
.first { margin-top: 3px; }
.h30 { height: 30px; } .h35 { height: 35px; } .h39 { height: 39px; } .h40 { height: 40px; } .h41 { height: 41px; } .h42 { height: 42px; } .h43 { height: 43px; } .h49 { height: 49px; } .h72 { height: 72px; }
.g5 { margin-top: 5px; } .g7 { margin-top: 7px; } .g8 { margin-top: 8px; } .g9 { margin-top: 9px; } .g10 { margin-top: 10px; } .g12 { margin-top: 12px; } .g16 { margin-top: 16px; } .g23 { margin-top: 23px; }
.lbl { width: 154px; margin-right: 7px; text-align: right; flex: none; white-space: nowrap; }
.in { width: 198px; height: 100%; border: 2.500px solid #b8b8b8; background: #fff; padding: 0 5px; display: flex; align-items: center; flex: none; white-space: pre; position: relative; }
.wide { width: 418px; }
.tall { align-items: flex-start; padding-top: 4px; }
.col2 { margin-left: 22px; }
.alert { background: #ff9999; }
.sel { padding-left: 7px; }
.chev { width: 12px; height: 12px; position: absolute; right: 12px; top: 11px; }
.cal { background: #ffcccc; border: 0; border-top: 5px solid #ff9999; border-bottom: 5px solid #ff9999; color: #8a5c5c; }
.box { width: 27px; height: 24px; border: 2.500px solid #777; background: #fff; flex: none; display: block; }
.filled { margin-left: 1px; background: #222; box-shadow: inset 0 0 0 3px #fff; }
.show-text { margin-left: 12px; flex: none; font-size: 22px; white-space: nowrap; }
.btn { background: #dcdcdc; border: 2.500px solid #7a7a7a; display: flex; align-items: center; justify-content: center; flex: none; }
.text-btn { width: 59px; height: 38px; margin-left: 29px; border-color: #999; }
.swap-btn { width: 86px; height: 39px; margin-left: 34px; }
.start-lbl { margin-left: 226px; width: 60px; text-align: right; flex: none; }
.end-lbl { margin-left: 50px; flex: none; }
.act { width: 198px; height: 40px; }

.shape { flex: 1; position: relative; }
.sec-title { text-align: center; height: 40px; line-height: 36px; font-size: 21px; }
.s-first { margin-top: 0; }
.shape-tabs { margin: 20px 0 0 34px; display: flex; gap: 2px; height: 40px; }
.stab { background: #e8e8e8; border: 2.500px solid #c2c2c2; border-bottom: 0; display: flex; align-items: center; justify-content: center; font-size: 21px; white-space: nowrap; }
.w66 { width: 66px; } .w71 { width: 71px; } .w98 { width: 98px; } .w105 { width: 105px; } .w100 { width: 100px; }
.strip { margin-left: 30px; width: 455px; height: 10px; border: 2.500px solid #c0c0c0; background: #fff; }
.combo { height: 100%; background: #eaeaea; border: 2.500px solid #b5b5b5; position: relative; flex: none; }
.w118 { width: 118px; }
.w54 { width: 54px; }
.gl { margin-left: 2px; }
.colour { width: 98px; height: 100%; margin-left: 2px; background: #e6e6e6; border: 3px solid #8f8f8f; border-width: 2px 0 2px 3px; display: flex; align-items: center; padding-left: 7px; gap: 7px; flex: none; }
.colour i { width: 56px; height: 20px; background: #000; display: block; }
.colour b { width: 0; height: 0; border: 6px solid transparent; border-top: 6px solid #111; border-bottom: 0; }
.spin { width: 120px; height: 100%; display: flex; border: 2px solid #999; flex: none; background: #fff; margin-left: 1px; }
.spin span { flex: 1; text-align: right; padding-right: 9px; line-height: 38px; }
.spin em { width: 30px; border-left: 2px solid #aaa; background: linear-gradient(#f4f4f4 0 8%, #fff 8% 50%, #e0e0e0 50% 100%); position: relative; display: block; }
.spin em::before, .spin em::after { content: ""; position: absolute; left: 8px; border: 6px solid transparent; }
.spin em::before { top: 2px; border-bottom: 5px solid #222; border-top: 0; }
.spin em::after { bottom: 2px; border-top: 5px solid #222; border-bottom: 0; }
.w119 { width: 119px; margin-left: 0; }
.preview { margin: 46px 0 0 37px; width: 527px; height: 207px; border: 4px solid #000; }
.settings { margin-top: 37px; height: 38px; }
.off-lbl { width: 100px; margin-right: 7px; text-align: right; flex: none; }
.opt { margin-left: 12px; flex: none; white-space: nowrap; }
.opt-wide { width: 181px; }
.opt:not(.opt-wide) { margin-right: 0; }
.row > .opt + .colour { margin-left: 33px; }

.status { height: 50px; flex: none; background: #d2d2d2; display: flex; align-items: center; font-size: 22.500px; }
.st-lbl { padding-left: 20px; flex: none; }
.w120 { width: 120px; }
.w194 { width: 193.500px; }
.st-combo { width: 299px; height: 100%; background: linear-gradient(#f1f1f1, #e1e1e1); border: 2px solid #c0c0c0; border-bottom-color: #aaa; padding-left: 11px; display: flex; align-items: center; flex: none; position: relative; }
.st-chev { top: 16px; right: 14px; }
.st-btn { width: 48px; height: 100%; margin-left: 2px; background: #dcdcdc; border: 2.500px solid #8f8f8f; display: flex; align-items: flex-end; justify-content: center; flex: none; padding-bottom: 2px; font-size: 18px; }
.st-txt { flex: none; }
.tasks { margin-left: 22px; }
.st-num { flex: none; }
.n94 { margin-left: 29px; margin-right: 23px; }
.n188 { margin-left: 19px; }
.st-date { margin-left: 1425px; flex: none; white-space: nowrap; }
.st-len { margin-left: 60px; flex: none; white-space: nowrap; }
.st-icon { height: 100%; border: 2.500px solid #8f8f8f; display: flex; align-items: center; justify-content: center; flex: none; }
.w48 { width: 49px; }
.fit { margin-left: 2px; }
.slider { width: 449px; height: 100%; padding: 0 10px; position: relative; display: flex; align-items: center; flex: none; }
.track { flex: 1; height: 5px; background: #e8e8e8; }
.thumb { position: absolute; left: 121px; top: 7px; width: 21px; height: 35px; background: #efefef; border: 2.500px solid #b0b0b0; }
```
